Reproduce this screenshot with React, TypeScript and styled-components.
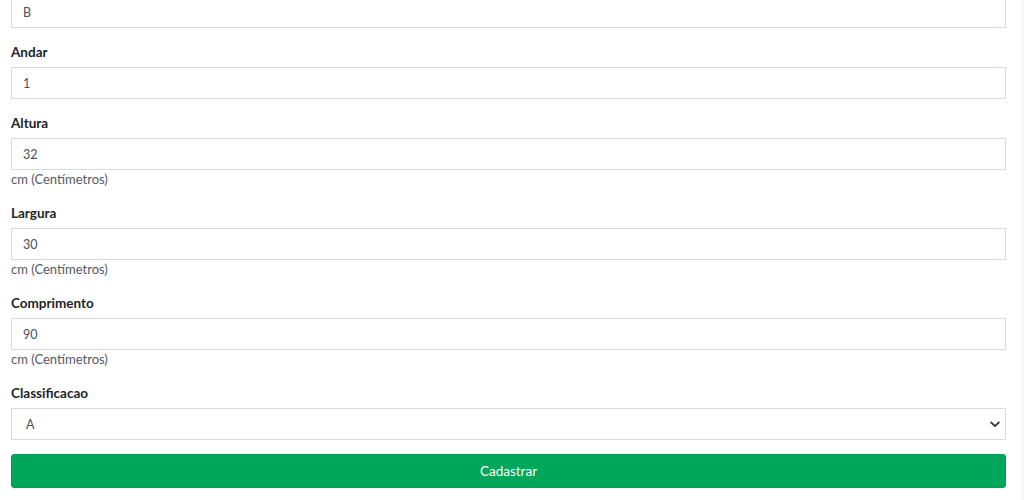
import styled, { createGlobalStyle } from 'styled-components';

const GlobalStyle = createGlobalStyle`
  html, body {
    margin: 0;
    padding: 0;
    height: 500px;
    overflow: hidden;
    background: #f4f6f9;
    font-family: Lato, "Liberation Sans", sans-serif;
  }
`;

interface IField {
  label: string;
  value: string;
  hint?: string;
}

const fields: IField[] = [
  { label: 'Andar', value: '1' },
  { label: 'Altura', value: '32', hint: 'cm (Centímetros)' },
  { label: 'Largura', value: '30', hint: 'cm (Centímetros)' },
  { label: 'Comprimento', value: '90', hint: 'cm (Centímetros)' },
];

const App = () => {
  return (
    <>
      <GlobalStyle />
      <Page>
        <Card>
          <Form onSubmit={(event) => event.preventDefault()}>
            <Group>
              <Input defaultValue="B" readOnly />
            </Group>

            {fields.map((field) => (
              <Group key={field.label}>
                <Label>{field.label}</Label>
                <Input defaultValue={field.value} readOnly />
                {field.hint && <Hint>{field.hint}</Hint>}
              </Group>
            ))}

            <Group>
              <Label>Classificacao</Label>
              <SelectWrapper>
                <Select defaultValue="A">
                  <option value="A">A</option>
                  <option value="B">B</option>
                  <option value="C">C</option>
                </Select>
                <Chevron width="10" height="7" viewBox="0 0 10 7">
                  <path d="M1.2 1.5 L5 5.2 L8.8 1.5" fill="none" stroke="#343a40" strokeWidth="1.8" strokeLinecap="round" strokeLinejoin="round" />
                </Chevron>
              </SelectWrapper>
            </Group>

            <SubmitButton type="submit">Cadastrar</SubmitButton>
          </Form>
        </Card>
      </Page>
    </>
  );
};

export default App;

const Page = styled.div`
  display: flex;
  height: 500px;
  padding-right: 3px;
`;

const Card = styled.div`
  flex: 1;
  background: #ffffff;
  height: 500px;
`;

const Form = styled.form`
  display: flex;
  flex-direction: column;
  padding: 0 15px 0 11px;
  margin-top: -4px;
`;

const Group = styled.div`
  display: flex;
  flex-direction: column;
  margin-bottom: 14px;
`;

const Label = styled.label`
  font-size: 13.5px;
  font-weight: 700;
  color: #212529;
  line-height: 20px;
  margin-bottom: 5px;
`;

const Input = styled.input`
  box-sizing: border-box;
  height: 32px;
  width: 100%;
  border: 1px solid #d9d9e3;
  border-radius: 0;
  padding: 0 11px;
  font-family: Lato, "Liberation Sans", sans-serif;
  font-size: 12.5px;
  color: #495057;
  background: #ffffff;
  outline: none;
`;

const Hint = styled.span`
  font-size: 13px;
  color: #555b61;
  line-height: 19px;
`;

const SelectWrapper = styled.div`
  position: relative;
`;

const Select = styled.select`
  box-sizing: border-box;
  height: 32px;
  width: 100%;
  border: 1px solid #d9d9e3;
  border-radius: 0;
  padding: 0 14px;
  font-family: Lato, "Liberation Sans", sans-serif;
  font-size: 12.5px;
  color: #495057;
  background: #ffffff;
  appearance: none;
  outline: none;
`;

const Chevron = styled.svg`
  position: absolute;
  right: 6px;
  top: 13px;
  pointer-events: none;
`;

const SubmitButton = styled.button`
  height: 34px;
  width: 100%;
  border: 1px solid #009e52;
  border-radius: 3px;
  background: #00a65a;
  color: #ffffff;
  font-family: Lato, "Liberation Sans", sans-serif;
  font-size: 13.5px;
  cursor: pointer;
`;
